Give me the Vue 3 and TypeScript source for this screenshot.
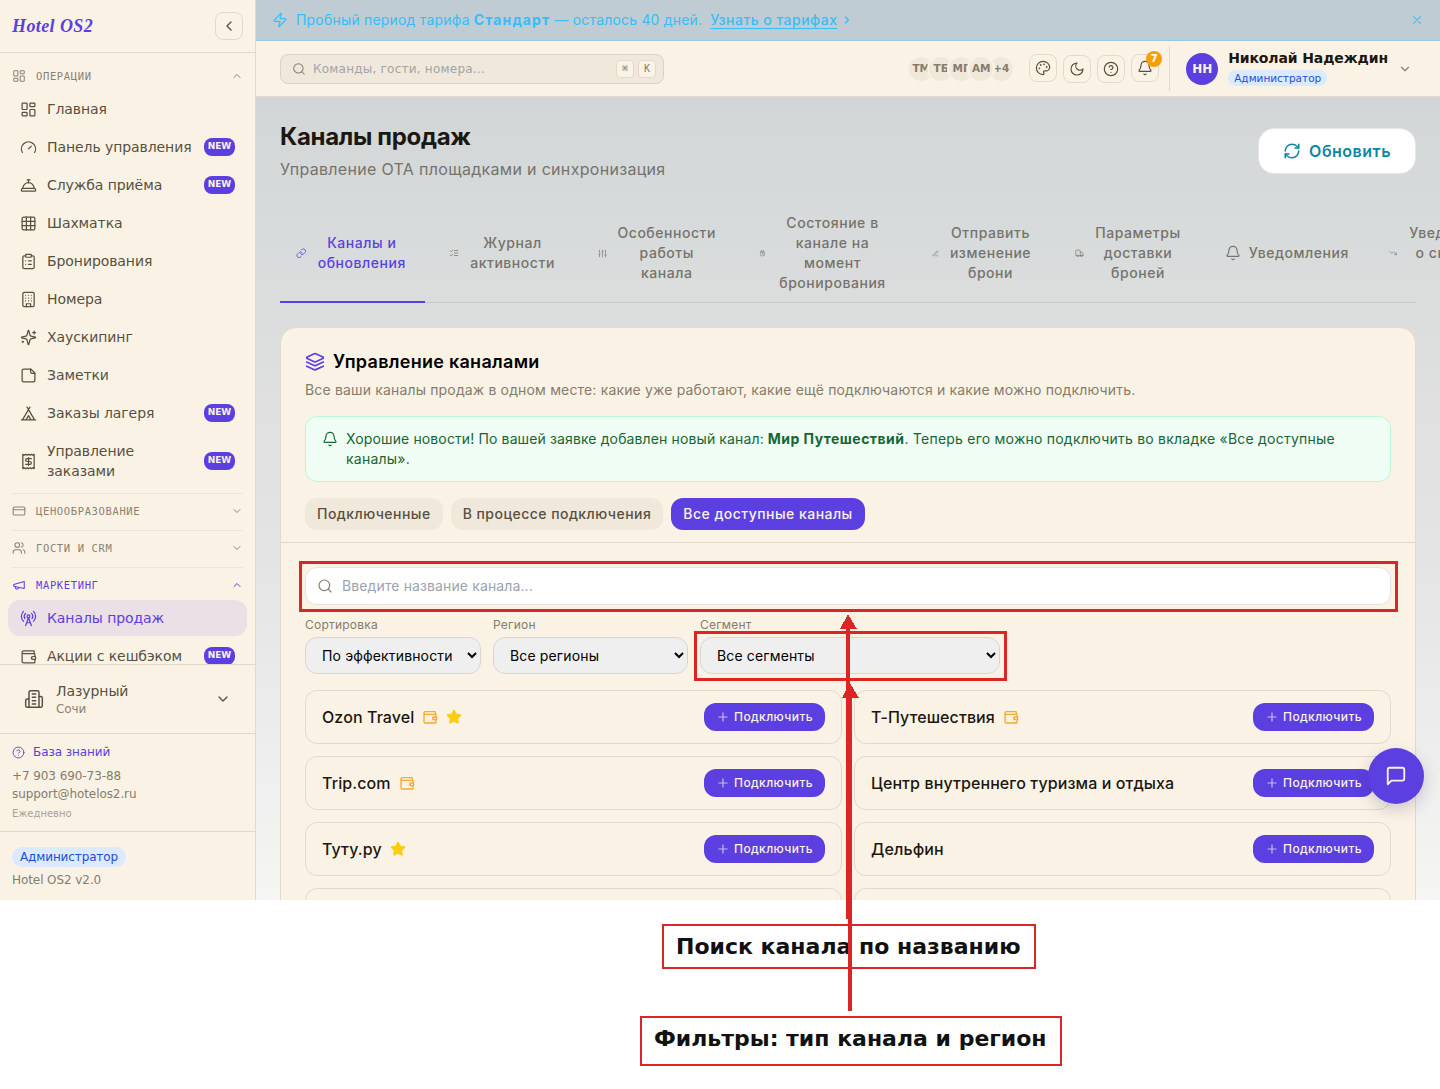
<script setup lang="ts">
import { h, type FunctionalComponent } from 'vue'

const paths: Record<string, string> = {
  dashboard: '<rect width="7" height="9" x="3" y="3" rx="1"/><rect width="7" height="5" x="14" y="3" rx="1"/><rect width="7" height="9" x="14" y="12" rx="1"/><rect width="7" height="5" x="3" y="16" rx="1"/>',
  gauge: '<path d="m12 14 4-4"/><path d="M3.34 19a10 10 0 1 1 17.32 0"/>',
  bellConcierge: '<path d="M3 20a1 1 0 0 1-1-1v-1a2 2 0 0 1 2-2h16a2 2 0 0 1 2 2v1a1 1 0 0 1-1 1Z"/><path d="M20 16a8 8 0 1 0-16 0"/><path d="M12 4v4"/><path d="M10 4h4"/>',
  grid: '<rect width="18" height="18" x="3" y="3" rx="2"/><path d="M3 9h18M3 15h18M9 3v18M15 3v18"/>',
  clipboard: '<rect width="8" height="4" x="8" y="2" rx="1"/><path d="M16 4h2a2 2 0 0 1 2 2v14a2 2 0 0 1-2 2H6a2 2 0 0 1-2-2V6a2 2 0 0 1 2-2h2"/><path d="M12 11h4M12 16h4M8 11h.01M8 16h.01"/>',
  hotel: '<rect width="16" height="20" x="4" y="2" rx="2"/><path d="M9 22v-4h6v4M8 6h.01M16 6h.01M12 6h.01M12 10h.01M12 14h.01M16 10h.01M16 14h.01M8 10h.01M8 14h.01"/>',
  sparkles: '<path d="M9.937 15.5A2 2 0 0 0 8.5 14.063l-6.135-1.582a.5.5 0 0 1 0-.962L8.5 9.936A2 2 0 0 0 9.937 8.5l1.582-6.135a.5.5 0 0 1 .963 0L14.063 8.5A2 2 0 0 0 15.5 9.937l6.135 1.581a.5.5 0 0 1 0 .964L15.5 14.063a2 2 0 0 0-1.437 1.437l-1.582 6.135a.5.5 0 0 1-.963 0z"/><path d="M20 3v4M22 5h-4M4 17v2M5 18H3"/>',
  note: '<path d="M15.5 3H5a2 2 0 0 0-2 2v14a2 2 0 0 0 2 2h14a2 2 0 0 0 2-2V8.500Z"/><path d="M15 3v4a2 2 0 0 0 2 2h4"/>',
  tent: '<path d="M3.500 21 14 3M20.500 21 10 3M15.500 21 12 15l-3.500 6M2 21h20"/>',
  receipt: '<path d="M4 2v20l2-1 2 1 2-1 2 1 2-1 2 1 2-1 2 1V2l-2 1-2-1-2 1-2-1-2 1-2-1-2 1Z"/><path d="M16 8h-6a2 2 0 1 0 0 4h4a2 2 0 1 1 0 4H8M12 17.500v-11"/>',
  card: '<rect width="20" height="14" x="2" y="5" rx="2"/><path d="M2 10h20"/>',
  users: '<path d="M16 21v-2a4 4 0 0 0-4-4H6a4 4 0 0 0-4 4v2"/><circle cx="9" cy="7" r="4"/><path d="M22 21v-2a4 4 0 0 0-3-3.870M16 3.130a4 4 0 0 1 0 7.750"/>',
  megaphone: '<path d="m3 11 18-5v12L3 14v-3z"/><path d="M11.600 16.800a3 3 0 1 1-5.800-1.600"/>',
  tower: '<path d="M4.900 16.100C1 12.200 1 5.800 4.900 1.900M7.800 4.700a6.140 6.140 0 0 0-.8 7.500"/><circle cx="12" cy="9" r="2"/><path d="M16.200 4.800c2 2 2.260 5.110.8 7.470M19.100 1.900a9.960 9.960 0 0 1 0 14.100M9.500 18h5M8 22l4-11 4 11"/>',
  wallet: '<path d="M17 14h.01"/><path d="M20 8V5a1 1 0 0 0-1-1H5a2 2 0 0 0 0 4h15a1 1 0 0 1 1 1v3m0 4v4a1 1 0 0 1-1 1H5a2 2 0 0 1-2-2V6"/><path d="M21 12h-3a2 2 0 0 0 0 4h3a1 1 0 0 0 1-1v-2a1 1 0 0 0-1-1Z"/>',
  building: '<path d="M6 22V4a2 2 0 0 1 2-2h8a2 2 0 0 1 2 2v18Z"/><path d="M6 12H4a2 2 0 0 0-2 2v6a2 2 0 0 0 2 2h2M18 9h2a2 2 0 0 1 2 2v9a2 2 0 0 1-2 2h-2M10 6h4M10 10h4M10 14h4M10 18h4"/>',
  help: '<circle cx="12" cy="12" r="10"/><path d="M9.090 9a3 3 0 0 1 5.830 1c0 2-3 3-3 3M12 17h.01"/>',
  up: '<path d="m18 15-6-6-6 6"/>',
  down: '<path d="m6 9 6 6 6-6"/>',
  left: '<path d="m15 18-6-6 6-6"/>',
  right: '<path d="m9 18 6-6-6-6"/>',
  close: '<path d="M18 6 6 18M6 6l12 12"/>',
  zap: '<path d="M4 14a1 1 0 0 1-.78-1.630l9.900-10.200a.5.5 0 0 1 .86.460l-1.920 6.020A1 1 0 0 0 13 10h7a1 1 0 0 1 .78 1.630l-9.900 10.200a.5.5 0 0 1-.86-.460l1.920-6.020A1 1 0 0 0 11 14z"/>',
  search: '<circle cx="11" cy="11" r="8"/><path d="m21 21-4.300-4.300"/>',
  palette: '<circle cx="13.500" cy="6.500" r=".5" fill="currentColor"/><circle cx="17.500" cy="10.500" r=".5" fill="currentColor"/><circle cx="8.500" cy="7.500" r=".5" fill="currentColor"/><circle cx="6.500" cy="12.500" r=".5" fill="currentColor"/><path d="M12 2C6.500 2 2 6.500 2 12s4.500 10 10 10c.926 0 1.648-.746 1.648-1.688 0-.437-.18-.835-.437-1.125-.29-.289-.438-.652-.438-1.125a1.640 1.640 0 0 1 1.668-1.668h1.996c3.051 0 5.555-2.503 5.555-5.554C21.965 6.012 17.461 2 12 2z"/>',
  moon: '<path d="M12 3a6 6 0 0 0 9 9 9 9 0 1 1-9-9Z"/>',
  bell: '<path d="M10.268 21a2 2 0 0 0 3.464 0M3.262 15.326A1 1 0 0 0 4 17h16a1 1 0 0 0 .74-1.673C19.410 13.956 18 12.499 18 8A6 6 0 0 0 6 8c0 4.499-1.411 5.956-2.738 7.326"/>',
  refresh: '<path d="M3 12a9 9 0 0 1 9-9 9.750 9.750 0 0 1 6.740 2.740L21 8"/><path d="M21 3v5h-5M21 12a9 9 0 0 1-9 9 9.750 9.750 0 0 1-6.740-2.740L3 16"/><path d="M8 16H3v5"/>',
  link: '<path d="M10 13a5 5 0 0 0 7.540.540l3-3a5 5 0 0 0-7.070-7.070l-1.720 1.710"/><path d="M14 11a5 5 0 0 0-7.540-.540l-3 3a5 5 0 0 0 7.070 7.070l1.710-1.710"/>',
  checks: '<path d="m3 17 2 2 4-4M3 7l2 2 4-4M13 6h8M13 12h8M13 18h8"/>',
  sliders: '<path d="M4 21v-7M4 10V3M12 21v-9M12 8V3M20 21v-5M20 12V3M2 14h4M10 8h4M18 16h4"/>',
  fileClock: '<rect width="14" height="16" x="5" y="4" rx="4"/><path d="M8 9h8M12 9v5l4 2M8 4V2M16 4V2"/>',
  pencil: '<path d="M12 20h9M16.376 3.622a1 1 0 0 1 3.002 3.002L7.368 18.635a2 2 0 0 1-.855.506l-2.872.838a.5.5 0 0 1-.62-.62l.838-2.872a2 2 0 0 1 .506-.854z"/>',
  truck: '<path d="M14 18V5a2 2 0 0 0-2-2H4a2 2 0 0 0-2 2v12a1 1 0 0 0 1 1h2M15 18H9M19 18h2a1 1 0 0 0 1-1v-4l-4-5h-4"/><circle cx="17" cy="18" r="2"/><circle cx="7" cy="18" r="2"/>',
  trendDown: '<path d="m22 17-8.500-8.500-5 5L2 7M16 17h6v-6"/>',
  layers: '<path d="M12.830 2.180a2 2 0 0 0-1.660 0L2.600 6.080a1 1 0 0 0 0 1.830l8.580 3.910a2 2 0 0 0 1.660 0l8.580-3.900a1 1 0 0 0 0-1.830z"/><path d="m22 12-9.170 4.160a2 2 0 0 1-1.660 0L2 12M22 17l-9.170 4.160a2 2 0 0 1-1.660 0L2 17"/>',
  plus: '<path d="M5 12h14M12 5v14"/>',
  star: '<path fill="currentColor" d="M11.525 2.295a.53.53 0 0 1 .95 0l2.310 4.679a2.120 2.120 0 0 0 1.595 1.160l5.166.756a.53.53 0 0 1 .294.904l-3.736 3.638a2.120 2.120 0 0 0-.611 1.878l.882 5.140a.53.53 0 0 1-.771.560l-4.618-2.428a2.120 2.120 0 0 0-1.973 0L6.396 21.010a.53.53 0 0 1-.77-.560l.881-5.139a2.120 2.120 0 0 0-.611-1.879L2.160 9.795a.53.53 0 0 1 .294-.906l5.165-.755a2.120 2.120 0 0 0 1.597-1.160z"/>',
  message: '<path d="M21 15a2 2 0 0 1-2 2H7l-4 4V5a2 2 0 0 1 2-2h14a2 2 0 0 1 2 2z"/>',
}

const Icon: FunctionalComponent<{ name: string; size: number; w?: number }> = (p) =>
  h('svg', {
    class: 'icon', width: p.size, height: p.size, viewBox: '0 0 24 24', fill: 'none', stroke: 'currentColor',
    'stroke-width': p.w ?? 1.75, 'stroke-linecap': 'round', 'stroke-linejoin': 'round', innerHTML: paths[p.name],
  })
Icon.props = ['name', 'size', 'w']

interface NavItem { label: string; icon: string; isNew?: boolean; active?: boolean }
interface NavGroup { title: string; icon: string; open?: boolean; accent?: boolean; items: NavItem[] }
interface Channel { name: string; cashback?: boolean; top?: boolean }

const groups: NavGroup[] = [
  {
    title: 'ОПЕРАЦИИ', icon: 'dashboard', open: true, items: [
      { label: 'Главная', icon: 'dashboard' },
      { label: 'Панель управления', icon: 'gauge', isNew: true },
      { label: 'Служба приёма', icon: 'bellConcierge', isNew: true },
      { label: 'Шахматка', icon: 'grid' },
      { label: 'Бронирования', icon: 'clipboard' },
      { label: 'Номера', icon: 'hotel' },
      { label: 'Хаускипинг', icon: 'sparkles' },
      { label: 'Заметки', icon: 'note' },
      { label: 'Заказы лагеря', icon: 'tent', isNew: true },
      { label: 'Управление заказами', icon: 'receipt', isNew: true },
    ],
  },
  { title: 'ЦЕНООБРАЗОВАНИЕ', icon: 'card', items: [] },
  { title: 'ГОСТИ И CRM', icon: 'users', items: [] },
  {
    title: 'МАРКЕТИНГ', icon: 'megaphone', open: true, accent: true, items: [
      { label: 'Каналы продаж', icon: 'tower', active: true },
      { label: 'Акции с кешбэком', icon: 'wallet', isNew: true },
    ],
  },
]

const tabs = [
  { lines: ['Каналы и', 'обновления'], icon: 'link', size: 10.5, width: 94.5 },
  { lines: ['Журнал', 'активности'], icon: 'checks', size: 10, width: 91 },
  { lines: ['Особенности', 'работы', 'канала'], icon: 'sliders', size: 9, width: 103.5 },
  { lines: ['Состояние в', 'канале на', 'момент', 'бронирования'], icon: 'fileClock', size: 7, width: 118 },
  { lines: ['Отправить', 'изменение', 'брони'], icon: 'pencil', size: 7, width: 88 },
  { lines: ['Параметры', 'доставки', 'броней'], icon: 'truck', size: 9, width: 93 },
  { lines: ['Уведомления'], icon: 'bell', size: 16, width: 100.5 },
  { lines: ['Уведомления', 'о снижении', '\u00a0'], icon: 'trendDown', size: 8, width: 108.5 },
]

const team = ['ТМ', 'ТБ', 'МГ', 'АМ', '+4']

const channels: Channel[] = [
  { name: 'Ozon Travel', cashback: true, top: true },
  { name: 'Т-Путешествия', cashback: true },
  { name: 'Trip.com', cashback: true },
  { name: 'Центр внутреннего туризма и отдыха' },
  { name: 'Туту.ру', top: true },
  { name: 'Дельфин' },
  { name: '' },
  { name: '' },
]
</script>

<template>
  <div class="page">
    <div class="app">
      <aside class="sidebar">
        <header class="brand">
          <span class="logo">Hotel OS2</span>
          <button class="square"><Icon name="left" :size="16" :w="2" /></button>
        </header>
        <nav class="nav">
          <section v-for="g in groups" :key="g.title" class="group" :class="{ accent: g.accent }">
            <div class="group-head">
              <Icon :name="g.icon" :size="14" />
              <span class="group-title">{{ g.title }}</span>
              <Icon :name="g.open ? 'up' : 'down'" :size="12" :w="2" />
            </div>
            <div v-if="g.open" class="items">
              <a v-for="i in g.items" :key="i.label" class="item" :class="{ active: i.active }">
                <Icon :name="i.icon" :size="17" />
                <span class="item-label">{{ i.label }}</span>
                <span v-if="i.isNew" class="new">NEW</span>
              </a>
            </div>
          </section>
        </nav>
        <div class="property">
          <Icon name="building" :size="20" />
          <div class="property-text">
            <div class="property-name">Лазурный</div>
            <div class="property-city">Сочи</div>
          </div>
          <Icon name="down" :size="16" :w="2" />
        </div>
        <div class="support">
          <a class="kb"><Icon name="help" :size="13" /><span>База знаний</span></a>
          <div>+7 903 690-73-88</div>
          <div>support@hotelos2.ru</div>
          <div class="daily">Ежедневно</div>
        </div>
        <div class="foot">
          <span class="role role-lg">Администратор</span>
          <div>Hotel OS2 v2.0</div>
        </div>
      </aside>

      <div class="main">
        <div class="trial">
          <Icon name="zap" :size="16" />
          <span>Пробный период тарифа <b>Стандарт</b> — осталось 40 дней.</span>
          <a class="trial-link">Узнать о тарифах</a>
          <Icon class="trial-arrow" name="right" :size="12" :w="2.5" />
          <Icon class="trial-close" name="close" :size="14" :w="2" />
        </div>

        <div class="topbar">
          <div class="command">
            <Icon name="search" :size="14" />
            <span class="command-text">Команды, гости, номера...</span>
            <kbd>⌘</kbd><kbd>K</kbd>
          </div>
          <div class="team"><span v-for="t in team" :key="t" class="mate">{{ t }}</span></div>
          <div class="tools">
            <button class="square raised"><Icon name="palette" :size="16" /></button>
            <button class="square"><Icon name="moon" :size="16" /></button>
            <button class="square"><Icon name="help" :size="16" /></button>
            <button class="square raised"><Icon name="bell" :size="16" /><span class="count">7</span></button>
          </div>
          <div class="user">
            <span class="avatar">НН</span>
            <div class="user-info">
              <div class="user-name">Николай Надеждин</div>
              <span class="role">Администратор</span>
            </div>
            <Icon class="user-chevron" name="down" :size="14" :w="2" />
          </div>
        </div>

        <div class="content">
          <div class="head">
            <div>
              <h1>Каналы продаж</h1>
              <p class="sub">Управление ОТА площадками и синхронизация</p>
            </div>
            <button class="refresh"><Icon name="refresh" :size="18" :w="2" /><span>Обновить</span></button>
          </div>

          <div class="tabs">
            <button v-for="(t, n) in tabs" :key="n" class="tab" :class="{ current: n === 0 }">
              <Icon :name="t.icon" :size="t.size" :w="1.75" />
              <span class="tab-text" :style="{ width: t.width + 'px' }">
                <span v-for="l in t.lines" :key="l" class="line">{{ l }}</span>
              </span>
            </button>
          </div>

          <section class="card">
            <div class="card-head">
              <h2><Icon name="layers" :size="20" :w="2" />Управление каналами</h2>
              <p class="desc">Все ваши каналы продаж в одном месте: какие уже работают, какие ещё подключаются и какие можно подключить.</p>
              <div class="notice">
                <Icon name="bell" :size="16" />
                <span>Хорошие новости! По вашей заявке добавлен новый канал: <b>Мир Путешествий</b><span class="tail">. Теперь его можно подключить во вкладке «Все доступные каналы».</span></span>
              </div>
              <div class="pills">
                <button class="pill">Подключенные</button>
                <button class="pill">В процессе подключения</button>
                <button class="pill on">Все доступные каналы</button>
              </div>
            </div>
            <div class="card-body">
              <div class="find"><Icon name="search" :size="16" /><span>Введите название канала...</span></div>
              <div class="filters">
                <label class="f1">Сортировка<select><option>По эффективности</option></select></label>
                <label class="f2">Регион<select><option>Все регионы</option></select></label>
                <label class="f3">Сегмент<select><option>Все сегменты</option></select></label>
              </div>
              <div class="grid">
                <div v-for="(c, n) in channels" :key="n" class="channel">
                  <template v-if="c.name">
                    <span class="channel-name">{{ c.name }}</span>
                    <Icon v-if="c.cashback" class="cash" name="wallet" :size="16" :w="2" />
                    <Icon v-if="c.top" class="star" name="star" :size="16" />
                    <button class="connect"><Icon name="plus" :size="14" :w="2" /><span>Подключить</span></button>
                  </template>
                </div>
              </div>
            </div>
          </section>
        </div>
      </div>
      <button class="chat"><Icon name="message" :size="22" :w="2" /></button>
    </div>

    <div class="mark mark-search"></div>
    <div class="mark mark-filter"></div>
    <div class="caption caption-search">Поиск канала по названию</div>
    <div class="caption caption-filter">Фильтры: тип канала и регион</div>
    <svg class="arrows" width="1440" height="1089" viewBox="0 0 1440 1089" fill="#dc2626" shape-rendering="crispEdges">
      <path d="M846 625h4v294h-4zM848 614l9 15h-17z" />
      <path d="M848 690h4v321h-4zM850 683l9 15h-17z" />
    </svg>
  </div>
</template>

<style>
body { margin: 0; background: #fff; }
</style>

<style scoped>
* { box-sizing: border-box; }
button { font: inherit; letter-spacing: inherit; border: 0; background: none; padding: 0; color: inherit; }
h1, h2, p { margin: 0; }
.icon { flex: none; display: block; }
.page { position: relative; width: 1440px; height: 1089px; overflow: hidden; background: #fff; }
.app { position: relative; display: flex; height: 900px; overflow: hidden; background: linear-gradient(180deg, #cdd2d5 0, #d6dada 210px, #dcdedd 330px, #e4e4e4 560px, #f5f5f4 900px); font-family: Inter, sans-serif; }

.sidebar { flex: none; width: 256px; display: flex; flex-direction: column; background: #faf3e5; border-right: 1px solid #e2d9cb; font-family: "DejaVu Sans", sans-serif; color: #57503f; letter-spacing: -.08px; }
.brand { flex: none; height: 53px; padding: 0 12px; display: flex; align-items: center; justify-content: space-between; border-bottom: 1px solid #e2d9cb; }
.logo { font: italic bold 18px/24px "Liberation Serif", serif; letter-spacing: .4px; color: #5b3fe0; }
.square { position: relative; width: 28px; height: 28px; border: 1px solid #e2d9cb; border-radius: 8px; display: flex; align-items: center; justify-content: center; color: #57503f; }
.nav { flex: 1; min-height: 0; overflow: hidden; padding: 8px 8px 0; }
.group { padding-bottom: 4px; }
.group + .group { padding-top: 3px; background: linear-gradient(#ece4d6, #ece4d6) 4px 0 / 231px 1px no-repeat; }
.group-head { height: 30px; padding: 0 4px; display: flex; align-items: center; color: #8a8172; }
.group-title { flex: 1; margin-left: 10px; font-family: "DejaVu Sans Mono", monospace; font-size: 10.5px; letter-spacing: .63px; }
.accent .group-head { color: #5b3fe0; }
.items { display: flex; flex-direction: column; gap: 2px; }
.item { display: flex; align-items: center; gap: 10px; padding: 8px 12px; border-radius: 12px; font-size: 14px; line-height: 20px; }
.item.active { background: #eae0e5; color: #5b3fe0; }
.item-label { flex: 1; }
.new { width: 31px; height: 18px; border-radius: 8px; background: #5b3fe0; color: #faf3e5; font-size: 9px; font-weight: 700; line-height: 16px; letter-spacing: 0; text-align: center; }
.property { flex: none; height: 69px; border-top: 1px solid #e2d9cb; padding: 0 24px; display: flex; align-items: center; }
.property-text { flex: 1; margin-left: 12px; }
.property-name { font-size: 14px; line-height: 19px; }
.property-city { font-size: 12px; line-height: 16px; color: #8a8172; }
.support { flex: none; height: 98px; border-top: 1px solid #e2d9cb; padding: 9px 12px 0; font-size: 12px; line-height: 18px; color: #857c6d; }
.kb { display: flex; align-items: center; gap: 8px; margin-bottom: 6px; color: #5b3fe0; }
.daily { font-size: 10px; line-height: 21px; letter-spacing: 0; color: #aaa193; }
.foot { flex: none; height: 69px; border-top: 1px solid #e2d9cb; padding: 15px 12px 0; font-size: 12px; line-height: 26px; color: #857c6d; }
.role { display: table; padding: 0 6px; border-radius: 8px; background: #dbeafe; color: #1d4ed8; font-size: 10.5px; line-height: 16px; }
.role-lg { padding: 0 8px; border-radius: 10px; font-size: 12px; line-height: 20px; letter-spacing: -.12px; }

.main { flex: 1; min-width: 0; overflow: hidden; }
.trial { height: 41px; padding: 0 16px; display: flex; align-items: center; border-bottom: 1px solid #8fc8e2; background: #bfccd3; color: #38bdf8; font-size: 14px; line-height: 20px; letter-spacing: .19px; }
.trial b { letter-spacing: 1.1px; }
.trial > span { margin-left: 8px; }
.trial-link { margin-left: 8px; font-weight: 500; letter-spacing: .46px; text-decoration: underline; text-underline-offset: 3px; }
.trial-arrow { margin-left: 4px; }
.trial-close { margin-left: auto; opacity: .8; }
.topbar { height: 56px; padding: 0 24px; display: flex; align-items: center; background: #faf3e5; border-bottom: 1px solid #e2d9cb; font-family: "DejaVu Sans", sans-serif; }
.command { width: 384px; height: 30px; padding: 0 7px 0 11px; display: flex; align-items: center; background: #f0e8db; border: 1px solid #dbd2c4; border-radius: 8px; color: #857c6d; }
.command-text { flex: 1; margin-left: 7px; font-size: 12px; letter-spacing: .23px; color: #a3a4a8; }
kbd { width: 18px; height: 18px; margin-left: 4px; border: 1px solid #e2d9cb; border-radius: 4px; background: #faf3e5; font: 10px/16px "DejaVu Sans Mono", monospace; text-align: center; }
.team { display: flex; margin-left: auto; }
.mate { position: relative; width: 28px; height: 28px; border: 2px solid #faf3e5; border-radius: 50%; background: #f0e8db; color: #857c6d; font-size: 10.5px; font-weight: 700; line-height: 23px; display: flex; justify-content: center; }
.mate + .mate { margin-left: -8px; }
.mate:nth-child(4) { z-index: 1; }
.tools { display: flex; gap: 6px; margin-left: 14px; }
.raised { top: -1px; }
.count { position: absolute; top: -4px; right: -4px; width: 16px; height: 16px; border-radius: 50%; background: #f59e0b; color: #fff; font-size: 10px; font-weight: 700; line-height: 16px; text-align: center; }
.user { height: 45px; margin-left: 10px; padding: 0 4px 0 16px; border-left: 1px solid #e2d9cb; display: flex; align-items: center; }
.avatar { width: 32px; height: 32px; margin-right: 10px; border-radius: 50%; background: #5b3fe0; color: #faf3e5; font-size: 12px; font-weight: 700; line-height: 32px; text-align: center; }
.user-info { margin-bottom: 2px; }
.user-name { font-size: 14px; font-weight: 700; line-height: 18px; letter-spacing: -.12px; color: #1c1710; margin-bottom: 3px; }
.user-chevron { margin-left: 10px; color: #857c6d; }

.content { padding: 24px 24px 0; }
.head { display: flex; justify-content: space-between; height: 84px; }
h1 { font-size: 24px; line-height: 32px; font-weight: 700; letter-spacing: -.32px; color: #1c1710; }
.sub { margin-top: 4px; font-size: 16px; line-height: 24px; letter-spacing: .31px; color: #75736c; }
.refresh { margin-top: 7px; width: 158px; height: 46px; display: flex; align-items: center; justify-content: center; gap: 8px; background: #fff; border: 1px solid #e5e7eb; border-radius: 16px; color: #0b87a3; font-size: 16px; font-weight: 600; letter-spacing: .5px; }
.tabs { display: flex; gap: 8px; height: 98px; border-bottom: 1px solid #c5c8c8; }
.tab { flex: none; height: 98px; padding: 0 16px; border-bottom: 2px solid transparent; display: flex; align-items: center; gap: 8px; font-size: 14px; line-height: 20px; font-weight: 500; letter-spacing: .54px; color: #75736c; }
.tab.current { color: #5b3fe0; border-color: #5b3fe0; }
.tab-text { text-align: center; }
.line { display: block; white-space: nowrap; }

.card { margin-top: 24px; height: 640px; background: #faf3e5; border: 1px solid #e2d9cb; border-radius: 16px; }
.card-head { padding: 22px 24px 12px; border-bottom: 1px solid #e2d9cb; }
h2 { display: flex; align-items: center; gap: 8px; font-size: 18px; line-height: 24px; font-weight: 600; letter-spacing: .28px; color: #000; }
h2 .icon { color: #5b3fe0; }
.desc { margin-top: 6px; font-size: 14px; line-height: 20px; letter-spacing: .16px; color: #857c6d; }
.notice { margin-top: 16px; display: flex; gap: 8px; padding: 12px 16px; border: 1px solid #bbf7d0; border-radius: 12px; background: #f0fdf4; color: #166534; font-size: 14px; line-height: 20px; letter-spacing: .125px; }
.notice b { letter-spacing: .46px; }
.notice .tail { letter-spacing: .23px; }
.notice .icon { margin-top: 2px; }
.pills { display: flex; gap: 8px; margin-top: 16px; }
.pill { height: 32px; padding: 0 12px 2px; border-radius: 12px; background: #f0e8db; color: #57503f; font-size: 14px; font-weight: 500; letter-spacing: .47px; }
.pill.on { background: #5b3fe0; color: #faf3e5; }
.card-body { padding: 24px 24px 0; }
.find { height: 38px; display: flex; align-items: center; gap: 9px; padding: 0 11px; background: #fff; border: 1px solid #e6e5e3; border-radius: 12px; font-size: 14px; letter-spacing: .12px; color: #9ca3af; }
.find span { margin-bottom: 2px; }
.find .icon { color: #857c6d; }
.filters { display: flex; gap: 12px; margin-top: 12px; font-size: 12px; line-height: 16px; letter-spacing: .22px; color: #857c6d; }
.filters label { display: flex; flex-direction: column; gap: 4px; }
.f1 { width: 176px; }
.f2 { width: 195px; }
.f3 { width: 300px; }
select { height: 37px; width: 100%; padding: 0 0 0 12px; border: 1px solid #d9d6d2; border-radius: 12px; background: #efefef; color: #000; font: 14px Inter, sans-serif; letter-spacing: .14px; }
.grid { display: grid; grid-template-columns: 1fr 1fr; gap: 12px; margin-top: 16px; }
.channel { height: 54px; padding: 0 16px; display: flex; align-items: center; border: 1px solid #e2d9cb; border-radius: 12px; }
.channel-name { font-size: 16px; font-weight: 500; letter-spacing: .1px; color: #1c1710; }
.cash { margin-left: 8px; color: #f59e0b; opacity: .85; }
.star { margin-left: 8px; color: #facc15; }
.connect { margin-left: auto; width: 121px; height: 28px; display: flex; align-items: center; justify-content: center; gap: 4px; border-radius: 12px; background: #5b3fe0; color: #faf3e5; font-size: 12px; font-weight: 500; letter-spacing: .4px; }
.connect span { margin-bottom: 1px; }
.connect .icon { opacity: .7; }
.chat { position: absolute; left: 1368px; top: 748px; width: 56px; height: 56px; border-radius: 50%; display: flex; align-items: center; justify-content: center; background: #5b3fe0; color: #faf3e5; box-shadow: 0 6px 16px rgba(60, 40, 120, .22); }

.mark { position: absolute; border: 3px solid #dc2626; }
.mark-search { left: 299px; top: 561px; width: 1099px; height: 51px; }
.mark-filter { left: 694px; top: 631px; width: 313px; height: 50px; }
.caption { position: absolute; border: 2px solid #dc2626; background: #fff; color: #111; font: bold 22px/26px "DejaVu Sans", sans-serif; white-space: nowrap; padding: 8px 12px; }
.caption-search { left: 662px; top: 924px; width: 374px; height: 45px; }
.caption-filter { left: 640px; top: 1016px; width: 422px; height: 50px; }
.arrows { position: absolute; left: 0; top: 0; }
</style>
